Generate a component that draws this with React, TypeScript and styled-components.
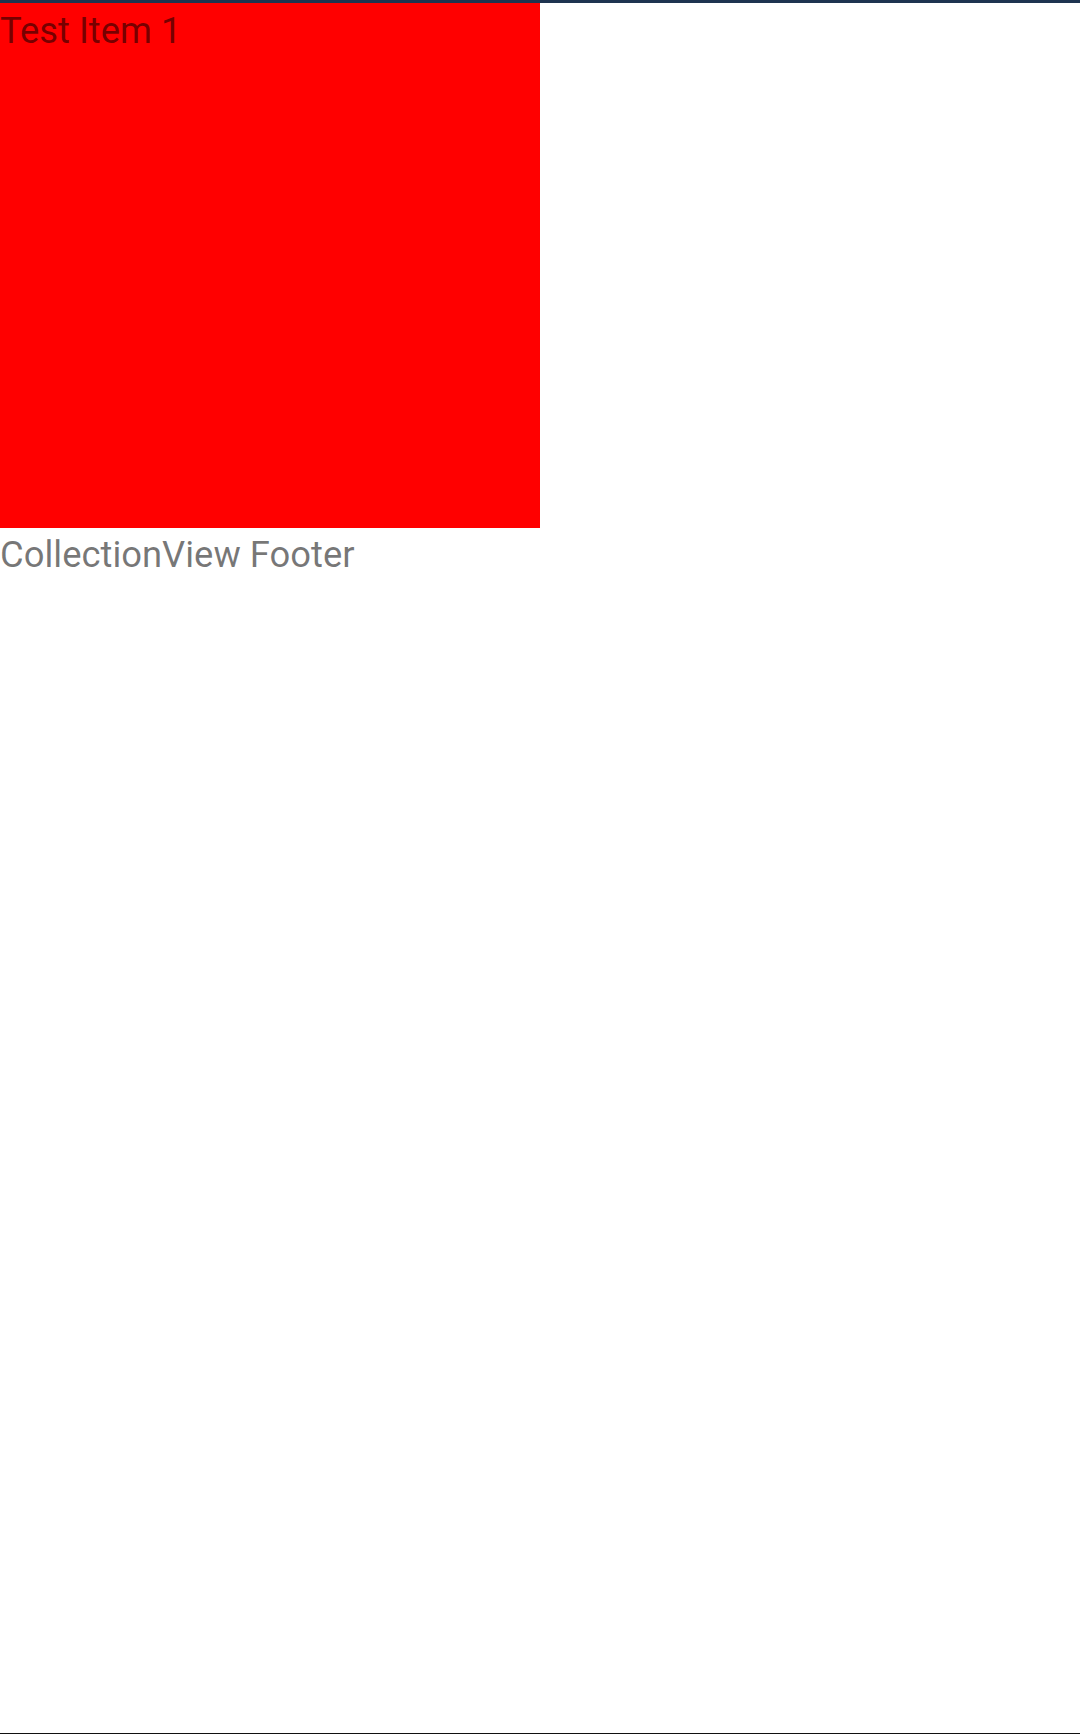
import React from "react";
import styled, { createGlobalStyle } from "styled-components";

const Global = createGlobalStyle`
  html, body { margin: 0; padding: 0; background: #ffffff; }
  body { font-family: Roboto, "Noto Sans", sans-serif; }
`;

const Screen = styled.div`
  display: flex;
  flex-direction: column;
  width: 1080px;
  height: 1735px;
  background: #ffffff;
`;

const StatusStrip = styled.div`
  height: 3px;
  flex: none;
  background: #1e3450;
`;

const Collection = styled.div`
  flex: 1;
  display: flex;
  flex-direction: column;
`;

const ItemCell = styled.div<{ $bg: string }>`
  width: 540px;
  height: 525px;
  background: ${(p) => p.$bg};
  box-sizing: border-box;
`;

const Label = styled.div<{ $top?: number }>`
  font-family: Roboto, sans-serif;
  font-size: 36.4px;
  line-height: normal;
  color: rgba(0, 0, 0, 0.54);
  padding-top: ${(p) => p.$top ?? 5}px;
  white-space: nowrap;
`;

const NavEdge = styled.div`
  height: 1px;
  flex: none;
  background: #111111;
  margin-bottom: 1px;
`;

const items = [{ title: "Test Item 1", color: "#ff0000" }];

export default function App() {
  return (
    <>
      <Global />
      <Screen>
        <StatusStrip />
        <Collection>
          {items.map((it) => (
            <ItemCell key={it.title} $bg={it.color}>
              <Label $top={5.5}>{it.title}</Label>
            </ItemCell>
          ))}
          <Label $top={4.5}>CollectionView Footer</Label>
        </Collection>
        <NavEdge />
      </Screen>
    </>
  );
}
